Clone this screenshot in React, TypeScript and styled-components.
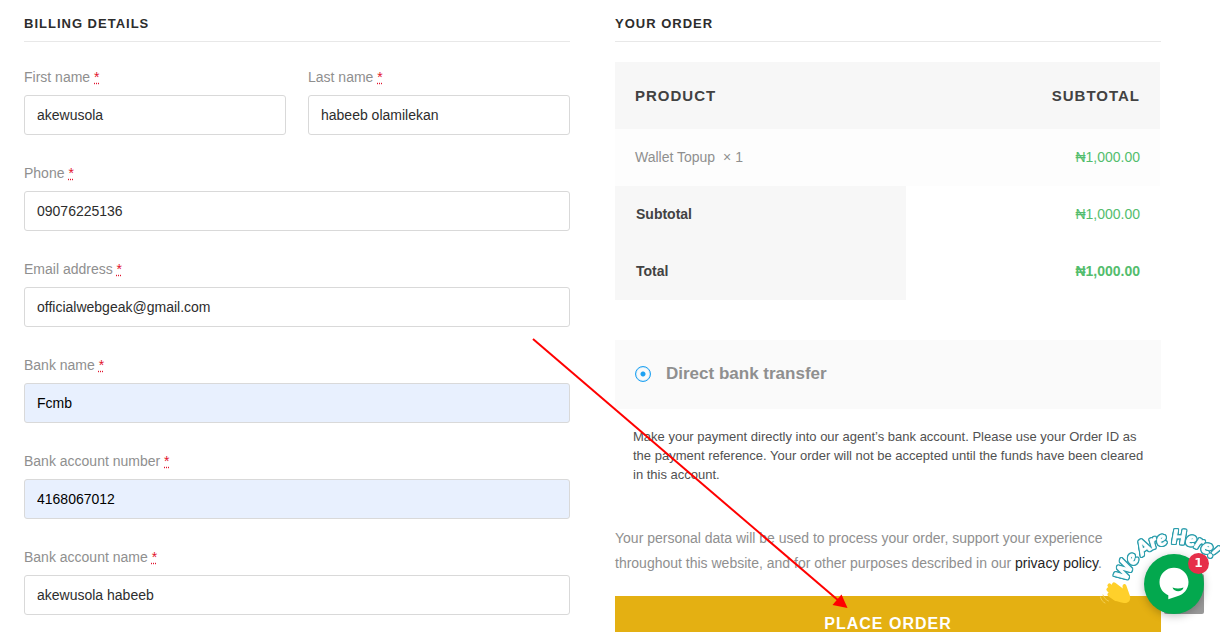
import React, { useId, useState } from "react";
import styled, { createGlobalStyle, css } from "styled-components";

const GlobalStyle = createGlobalStyle`
  *, *::before, *::after { box-sizing: border-box; }
  html { scrollbar-width: none; }
  body {
    margin: 0;
    background: #fff;
    color: #8f8f8f;
    font-family: "Liberation Sans", Arial, sans-serif;
    font-size: 14px;
    line-height: 25px;
    overflow-x: hidden;
  }
`;

const Page = styled.main`
  position: relative;
  display: grid;
  grid-template-columns: 1fr 1fr;
  column-gap: 45px;
  align-items: start;
  padding: 12px 59px 40px 24px;
`;

const Column = styled.section`
  min-width: 0;
`;

const Heading = styled.h3<{ $gap: number }>`
  margin: 0 0 ${(p) => p.$gap}px;
  padding-bottom: 5px;
  border-bottom: 1px solid #e8e8e8;
  color: #2d2d2d;
  font-size: 13px;
  line-height: 24px;
  letter-spacing: 1px;
  text-transform: uppercase;
`;

const Form = styled.form`
  display: grid;
  grid-template-columns: 1fr 1fr;
  gap: 26px 22px;
`;

const Field = styled.div<{ $half?: boolean }>`
  display: flex;
  flex-direction: column;
  gap: 5px;
  grid-column: ${(p) => (p.$half ? "auto" : "1 / -1")};
`;

const Required = styled.abbr`
  color: #e2142d;
  text-decoration: underline dotted;
`;

const Input = styled.input<{ $filled?: boolean }>`
  width: 100%;
  height: 40px;
  padding: 0 12px;
  border: 1px solid #d9d9d9;
  border-radius: 3px;
  background: ${(p) => (p.$filled ? "#e8f0fe" : "#fff")};
  color: ${(p) => (p.$filled ? "#000" : "#2d2d2d")};
  font: inherit;
`;

const OrderTable = styled.table`
  width: calc(100% - 1px);
  margin-bottom: 40px;
  border-collapse: collapse;
  table-layout: fixed;
`;

const cell = css`
  padding: 16px 20px;
  text-align: left;
  &:last-child { text-align: right; }
`;

const HeadCell = styled.th`
  ${cell}
  padding-top: 21px;
  padding-bottom: 21px;
  background: #f7f7f7;
  color: #424242;
  font-size: 15px;
  letter-spacing: 1px;
  text-transform: uppercase;
  &:first-child { width: 291px; }
`;

const ItemCell = styled.td`
  ${cell}
  background: #fdfdfd;
`;

const TotalLabel = styled.th`
  ${cell}
  padding-left: 21px;
  background: #f7f7f7;
  color: #424242;
`;

const TotalCell = styled.td`
  ${cell}
`;

const Amount = styled.span<{ $strong?: boolean }>`
  color: #53bd6d;
  font-weight: ${(p) => (p.$strong ? 700 : 400)};
`;

const Quantity = styled.span`
  margin-left: 4px;
`;

const Method = styled.label`
  display: flex;
  align-items: center;
  gap: 15px;
  padding: 21px 20px 22px;
  background: #fafafa;
  font-size: 17px;
  line-height: 26px;
  font-weight: 700;
`;

const Radio = styled.input`
  appearance: none;
  flex: none;
  width: 16px;
  height: 16px;
  margin: 0;
  border: 1px solid #1da1f2;
  border-radius: 50%;
  box-shadow: inset 0 0 1px #1da1f2;
  &:checked {
    background: radial-gradient(circle, #1da1f2 2px, transparent 3px);
  }
`;

const MethodNote = styled.p`
  margin: 18px 14px 42px 18px;
  color: #515151;
  font-size: 13px;
  line-height: 19px;
`;

const Privacy = styled.p`
  margin: 0 0 20px;
`;

const PolicyLink = styled.a`
  color: #242424;
  text-decoration: none;
`;

const PlaceOrder = styled.button`
  display: block;
  width: 100%;
  height: 56px;
  border: 0;
  background: #e4b012;
  color: #fff;
  font-family: inherit;
  font-size: 16px;
  font-weight: 700;
  letter-spacing: 1px;
  text-transform: uppercase;
`;

const Arrow = styled.svg`
  position: absolute;
  top: 338px;
  left: 532px;
  pointer-events: none;
`;

const ChatCorner = styled.aside`
  position: fixed;
  right: 16px;
  bottom: 18px;
  width: 60px;
  height: 60px;
`;

const BackToTop = styled.a`
  position: absolute;
  right: 0;
  bottom: 0;
  width: 40px;
  height: 40px;
  border-radius: 2px;
  background: #999;
`;

const ChatButton = styled.button`
  position: relative;
  display: block;
  width: 60px;
  height: 60px;
  padding: 0;
  border: 0;
  border-radius: 50%;
  background: #03a84e;
  box-shadow: 0 2px 8px rgba(0, 0, 0, 0.25);
  svg { display: block; }
`;

const Badge = styled.span`
  position: absolute;
  top: -1px;
  right: -5px;
  width: 21px;
  height: 21px;
  border-radius: 50%;
  background: #e62e49;
  color: #fff;
  font-family: "DejaVu Sans", sans-serif;
  font-size: 12px;
  font-weight: 700;
  line-height: 21px;
  text-align: center;
`;

const Greeting = styled.svg`
  position: absolute;
  top: -44px;
  left: -48px;
  overflow: visible;
  pointer-events: none;
  text {
    font-family: Lato, sans-serif;
    font-size: 19px;
    font-style: italic;
    font-weight: 900;
    filter: drop-shadow(1px 0 0 #2b9dac) drop-shadow(-1px 0 0 #2b9dac)
      drop-shadow(0 1px 0 #2b9dac) drop-shadow(0 -1px 0 #2b9dac);
  }
`;

type FieldInfo = { label: string; value: string; half?: boolean; filled?: boolean; type?: string };

const fields: FieldInfo[] = [
  { label: "First name", value: "akewusola", half: true },
  { label: "Last name", value: "habeeb olamilekan", half: true },
  { label: "Phone", value: "09076225136", type: "tel" },
  { label: "Email address", value: "officialwebgeak@gmail.com", type: "email" },
  { label: "Bank name", value: "Fcmb", filled: true },
  { label: "Bank account number", value: "4168067012", filled: true },
  { label: "Bank account name", value: "akewusola habeeb" },
];

function BillingField({ label, value, half, filled, type = "text" }: FieldInfo) {
  const id = useId();
  const [text, setText] = useState(value);
  return (
    <Field $half={half}>
      <label htmlFor={id}>
        {label} <Required title="required">*</Required>
      </label>
      <Input
        id={id}
        type={type}
        value={text}
        $filled={filled}
        spellCheck={false}
        onChange={(e) => setText(e.target.value)}
      />
    </Field>
  );
}

function OrderSummary() {
  return (
    <OrderTable>
      <thead>
        <tr>
          <HeadCell scope="col">Product</HeadCell>
          <HeadCell scope="col">Subtotal</HeadCell>
        </tr>
      </thead>
      <tbody>
        <tr>
          <ItemCell>
            Wallet Topup <Quantity>× 1</Quantity>
          </ItemCell>
          <ItemCell><Amount>₦1,000.00</Amount></ItemCell>
        </tr>
      </tbody>
      <tfoot>
        <tr>
          <TotalLabel scope="row">Subtotal</TotalLabel>
          <TotalCell><Amount>₦1,000.00</Amount></TotalCell>
        </tr>
        <tr>
          <TotalLabel scope="row">Total</TotalLabel>
          <TotalCell><Amount $strong>₦1,000.00</Amount></TotalCell>
        </tr>
      </tfoot>
    </OrderTable>
  );
}

function ChatWidget() {
  return (
    <ChatCorner>
      <BackToTop href="#top" aria-label="Back to top" />
      <ChatButton type="button" aria-label="Open chat">
        <svg width="60" height="60" viewBox="0 0 60 60" aria-hidden="true">
          <path
            d="M30 13.700C38.200 13.700 44.500 20 44.500 28C44.500 35.500 39.500 40.300 34 42L24.300 45.200V41.200C19 39 15.500 34.300 15.500 28C15.500 20 22 13.700 30 13.700Z"
            fill="#fff"
          />
          <path d="M28.500 33.500C32 34.800 36 34.800 39.500 33.500C38.500 38.500 30 38.500 28.500 33.500Z" fill="#03a84e" />
        </svg>
        <Badge>1</Badge>
      </ChatButton>
      <Greeting width="124" height="100" viewBox="0 0 124 100">
        <defs>
          <path id="greeting-arc" d="M31 72A50 50 0 0 1 122 57" />
        </defs>
        <text fill="#fff" stroke="#fff" strokeWidth="1" strokeLinejoin="round">
          <textPath href="#greeting-arc">We Are Here!</textPath>
        </text>
        <g strokeLinecap="round" strokeLinejoin="round">
          <path
            d="M18 74.500L28 82M13.500 75.500L25 85M12.500 79.500L22 87M13.500 84.500L20 89"
            fill="none"
            stroke="#ffd02b"
            strokeWidth="4.200"
          />
          <path
            d="M16 84L23 76L27 81L26.500 76.500C26.500 73.500 29.500 73 30.500 76L34 86C35 91 32 93.500 28 93C23 92.500 18.500 90.500 16 88Z"
            fill="#ffd02b"
          />
          <path d="M7 85C8 88 10 90 12.500 91M4.500 87C5 90 7 92 9 93" fill="none" stroke="#f3cf55" strokeWidth="1" />
        </g>
      </Greeting>
    </ChatCorner>
  );
}

export default function App() {
  return (
    <>
      <GlobalStyle />
      <Page id="top">
        <Column>
          <Heading $gap={23}>Billing details</Heading>
          <Form>
            {fields.map((f) => (
              <BillingField key={f.label} {...f} />
            ))}
          </Form>
        </Column>
        <Column>
          <Heading $gap={20}>Your order</Heading>
          <OrderSummary />
          <Method>
            <Radio type="radio" name="payment" defaultChecked />
            Direct bank transfer
          </Method>
          <MethodNote>
            Make your payment directly into our agent’s bank account. Please use your Order ID as the
            payment reference. Your order will not be accepted until the funds have been cleared in
            this account.
          </MethodNote>
          <Privacy>
            Your personal data will be used to process your order, support your experience throughout
            this website, and for other purposes described in our{" "}
            <PolicyLink href="#privacy">privacy policy</PolicyLink>.
          </Privacy>
          <PlaceOrder type="button">Place order</PlaceOrder>
        </Column>
        <Arrow width="318" height="272" viewBox="0 0 318 272" aria-hidden="true">
          <path d="M1 1L307 263" stroke="#f00" strokeWidth="2" />
          <path d="M315.500 270L309.500 256.500L300.500 267Z" fill="#f00" />
        </Arrow>
      </Page>
      <ChatWidget />
    </>
  );
}
